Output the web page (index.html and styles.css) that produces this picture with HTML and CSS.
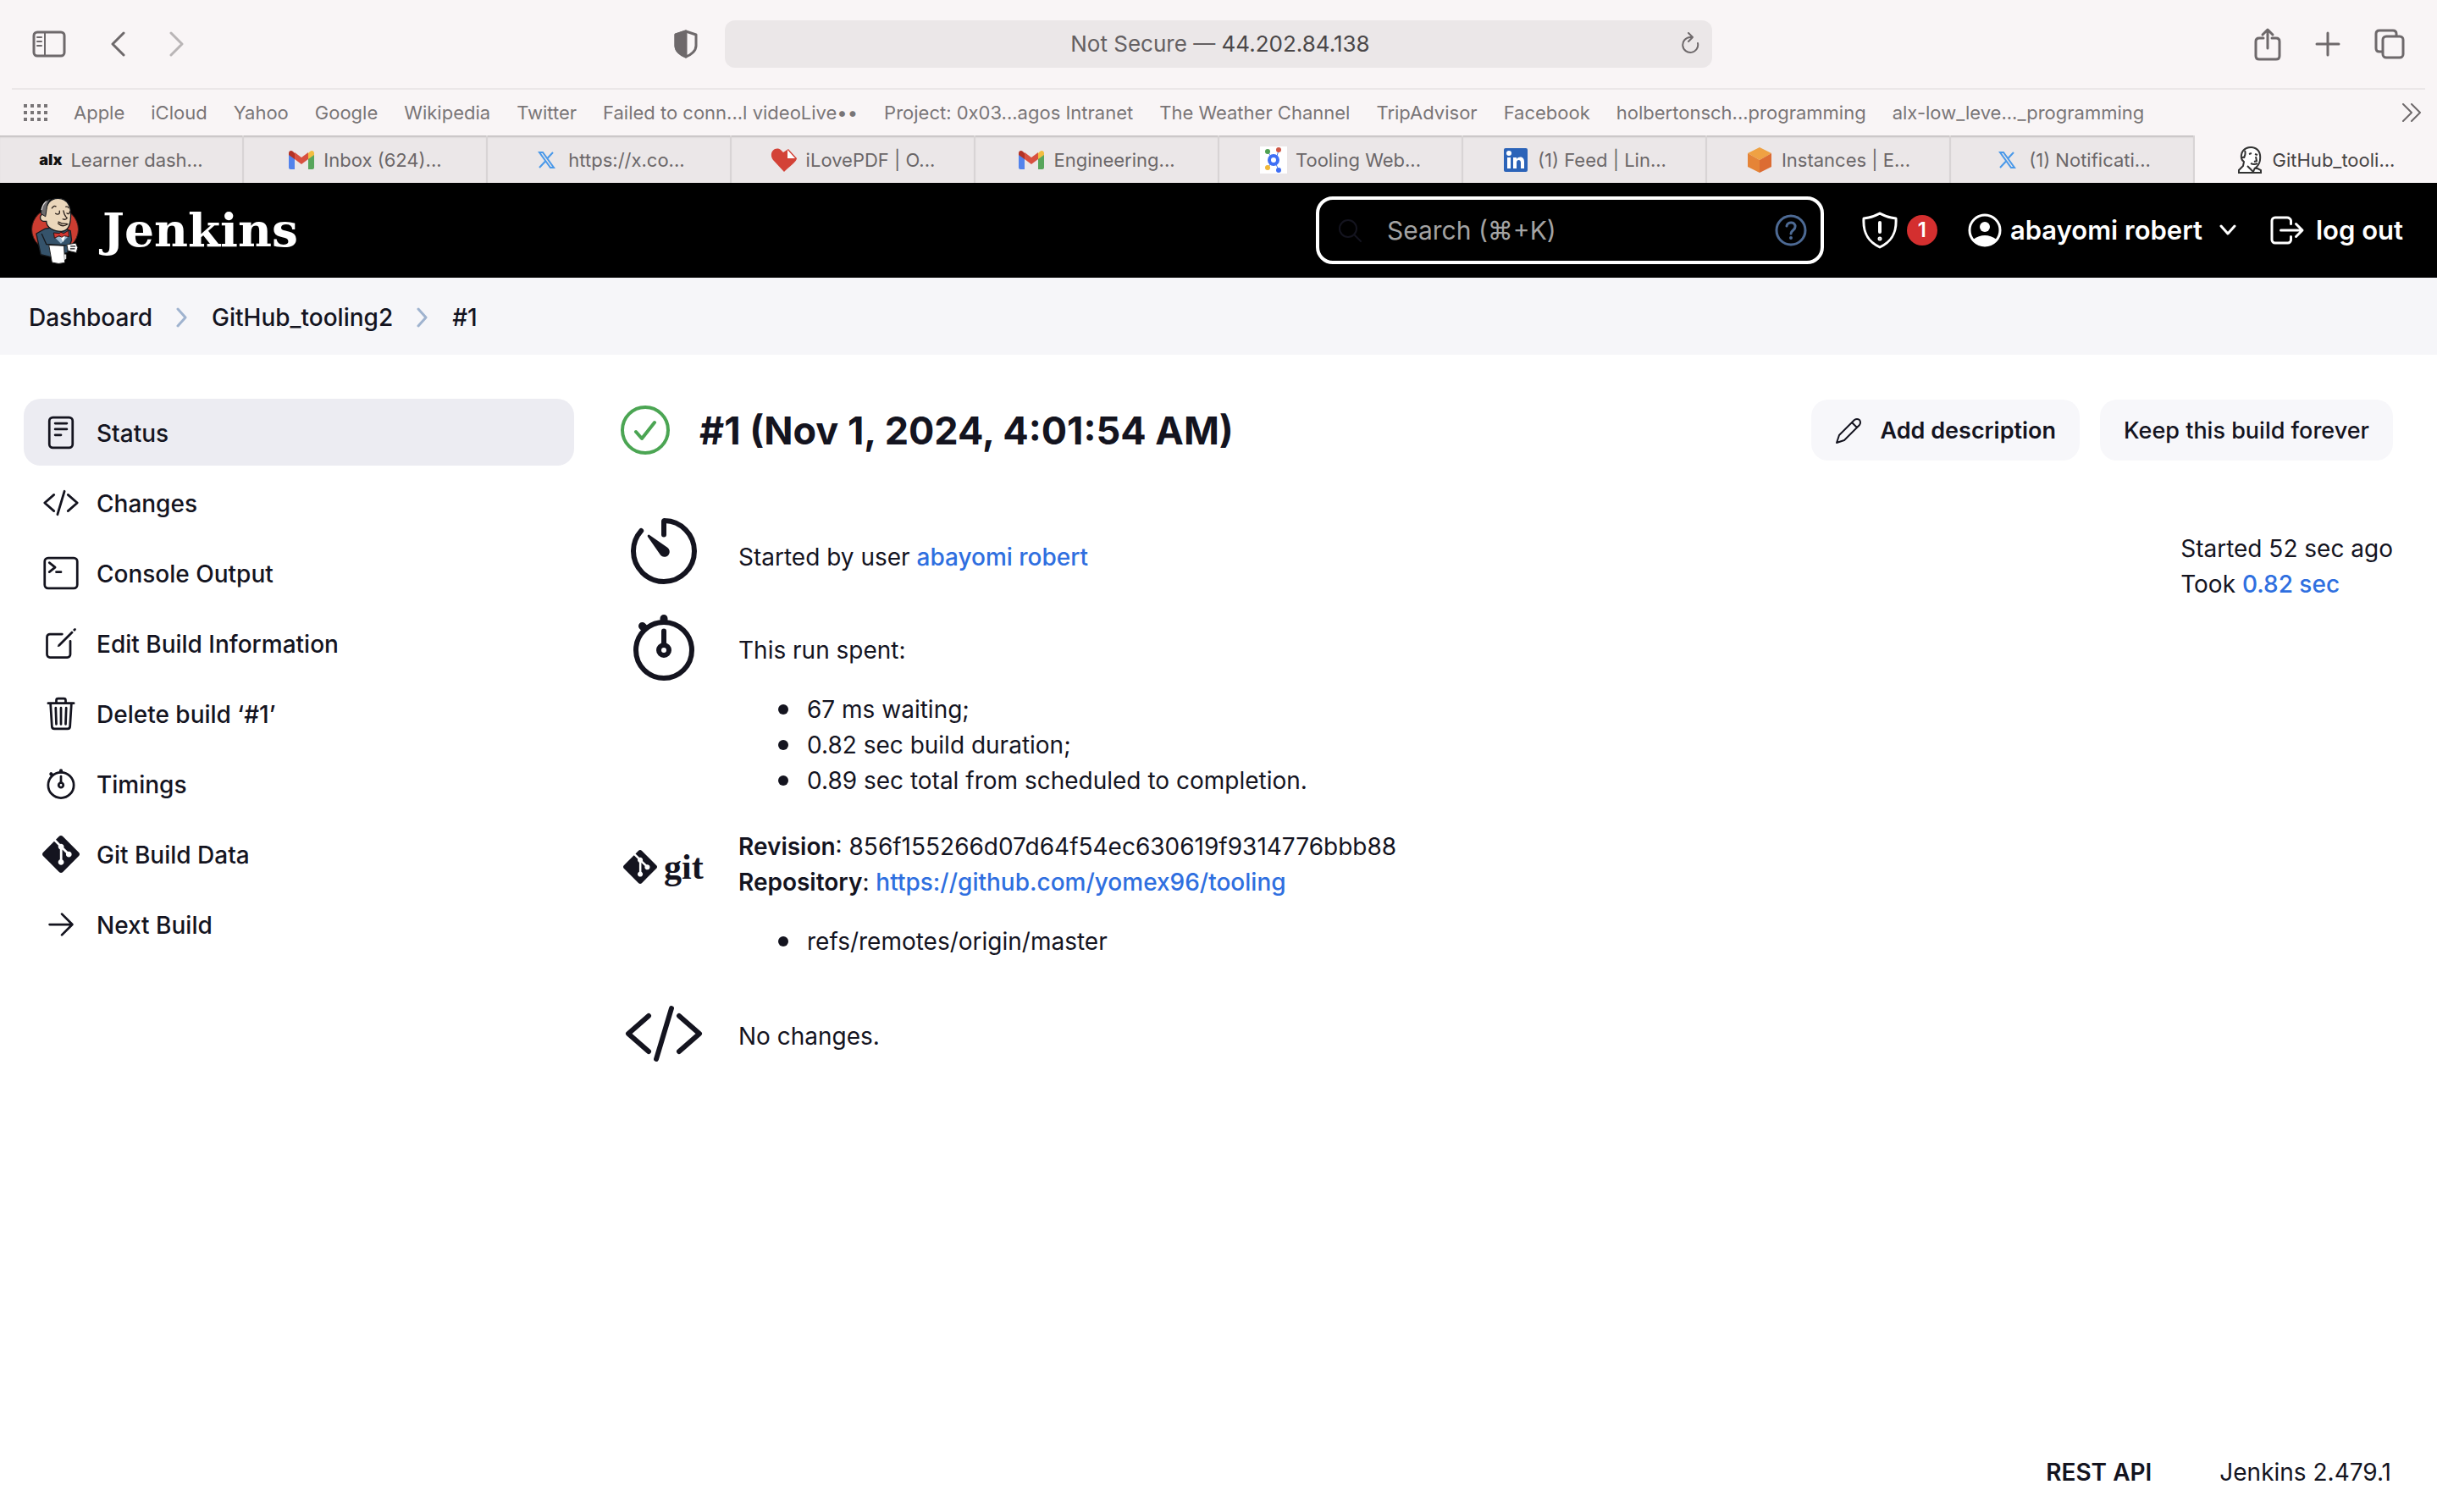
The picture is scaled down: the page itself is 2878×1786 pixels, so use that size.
FILE: index.html
```html
<!DOCTYPE html>
<html lang="en">
<head>
<meta charset="utf-8">
<title>GitHub_tooling2 #1 [Jenkins]</title>
<meta name="viewport" content="width=device-width, initial-scale=1">
<link rel="stylesheet" href="styles.css">
</head>
<body>
<svg class="sprite" aria-hidden="true">
  <symbol id="code" viewBox="0 0 512 512"><path d="M160 368 32 256l128-112M352 368l128-112-128-112M304 96l-96 320"/></symbol>
  <symbol id="stopwatch" viewBox="0 0 512 512"><path d="M256 232v-80"/><path d="M256 88V72M132 132l-12-12" stroke-width="48"/><circle cx="256" cy="272" r="32"/><circle cx="256" cy="272" r="176"/></symbol>
  <symbol id="git" viewBox="0 0 24 24"><path fill="currentColor" stroke="none" d="M23.546 10.93L13.067.452c-.604-.603-1.582-.603-2.188 0L8.708 2.627l2.76 2.76c.645-.215 1.379-.07 1.889.441.516.515.658 1.258.438 1.9l2.658 2.66c.645-.223 1.387-.078 1.9.435.721.72.721 1.884 0 2.604-.719.719-1.881.719-2.6 0-.539-.541-.674-1.337-.404-1.996L12.86 8.955v6.525c.176.086.342.203.488.348.713.721.713 1.883 0 2.6-.719.721-1.889.721-2.609 0-.719-.719-.719-1.879 0-2.598.182-.18.387-.316.605-.406V8.835c-.217-.091-.424-.222-.6-.401-.545-.545-.676-1.342-.396-2.009L7.636 3.7.45 10.881c-.6.605-.6 1.584 0 2.189l10.48 10.477c.604.604 1.582.604 2.186 0l10.43-10.43c.605-.603.605-1.582 0-2.187"/></symbol>
  <symbol id="gmail" viewBox="0 0 32 32"><path fill="#5383ec" d="M1 9v16c0 1 1 2 2 2h5V14z"/><path fill="#58a65c" d="M24 14v13h5c1 0 2-1 2-2V9z"/><path fill="#f2bd42" d="M24 8v7l7-5V8c0-3-3-4-5-2z"/><path fill="#b33225" d="M8 15V8L6 6C4 4 1 5 1 8v2z"/><path fill="#d85140" d="M8 15V7l8 6 8-6v8l-8 6z"/></symbol>
  <symbol id="xlogo" viewBox="0 0 32 32"><path fill="none" stroke="#4a99e9" stroke-width="2" d="M8 7h4l13 18h-4zM24 7 17 14.500M15 17.500 8 25"/></symbol>
</svg>

<header class="browser">
  <div class="toolbar">
    <div class="tools">
      <button class="tool" aria-label="Show sidebar"><svg width="40" height="32" viewBox="0 0 40 32"><rect x="2" y="2" width="36" height="28" rx="4"/><path d="M15 2v28M6 8h5M6 13h5M6 18h5" stroke-width="2"/></svg></button>
      <button class="tool" aria-label="Back"><svg width="18" height="30" viewBox="0 0 18 30"><path d="M16 2 3 15l13 13"/></svg></button>
      <button class="tool faded" aria-label="Forward"><svg width="18" height="30" viewBox="0 0 18 30"><path d="M2 2l13 13L2 28"/></svg></button>
    </div>
    <div class="address">
      <button class="tool" aria-label="Privacy report"><svg width="28" height="34" viewBox="0 0 28 34"><path d="M14 2 26 6v13c0 6-6 11-12 13C8 30 2 25 2 19V6z"/><path d="M14 2v30C8 30 2 25 2 19V6z" fill="currentColor"/></svg></button>
      <div class="url"><span class="url-text"><span>Not Secure —</span> 44.202.84.138</span>
        <button class="tool reload" aria-label="Reload"><svg width="24" height="28" viewBox="0 0 24 28"><path stroke-width="2" d="M21 13a9 9 0 1 1-9-7h3M10 1l5 5-5 5"/></svg></button></div>
    </div>
    <div class="tools tools-end">
      <button class="tool" aria-label="Share"><svg width="32" height="40" viewBox="0 0 32 40"><path d="M11 13H6q-4 0-4 4v17q0 4 4 4h20q4 0 4-4V17q0-4-4-4h-5M16 25V3M10 9l6-6 6 6"/></svg></button>
      <button class="tool" aria-label="New tab"><svg width="30" height="30" viewBox="0 0 30 30"><path d="M15 2v26M2 15h26"/></svg></button>
      <button class="tool" aria-label="Tab overview"><svg width="36" height="36" viewBox="0 0 36 36"><rect x="10" y="9" width="24" height="25" rx="4"/><path d="M9 27H6q-4 0-4-4V6q0-4 4-4h16q4 0 4 4v2"/></svg></button>
    </div>
  </div>
  <nav class="bookmarks" aria-label="Bookmarks">
    <svg width="28" height="20" viewBox="0 0 28 20"><path d="M2 0v20M10 0v20M18 0v20M26 0v20" stroke="currentColor" stroke-width="4" stroke-dasharray="4 4"/></svg>
    <a href="#">Apple</a><a href="#">iCloud</a><a href="#">Yahoo</a><a href="#">Google</a><a href="#">Wikipedia</a><a href="#">Twitter</a><a href="#">Failed to conn...l videoLive••</a><a href="#">Project: 0x03...agos Intranet</a><a href="#">The Weather Channel</a><a href="#">TripAdvisor</a><a href="#">Facebook</a><a href="#">holbertonsch...programming</a><a href="#">alx-low_leve..._programming</a>
    <button class="tool more" aria-label="More bookmarks"><svg width="24" height="22" viewBox="0 0 24 22"><path stroke-width="2" d="M2 1l10 10L2 21M12 1l10 10-10 10"/></svg></button>
  </nav>
  <nav class="tabs" aria-label="Tabs">
    <a class="tab" href="#"><span class="alx">alx</span>Learner dash...</a>
    <a class="tab" href="#"><svg><use href="#gmail"/></svg>Inbox (624)...</a>
    <a class="tab" href="#"><svg><use href="#xlogo"/></svg>https://x.co...</a>
    <a class="tab" href="#"><svg viewBox="0 0 32 32"><path fill="#d34237" d="M16 30 3 16C-3 8 5-1 12 4l3 3 6-4 10 11c-1 4-3 5-15 16z"/><path fill="#fff" d="M20 4l9 10h-9z"/></svg>iLovePDF | O...</a>
    <a class="tab" href="#"><svg><use href="#gmail"/></svg>Engineering...</a>
    <a class="tab" href="#"><svg viewBox="0 0 32 32"><path fill="#fff" d="M0 0h32v32H0z"/><path stroke="#4d7df0" d="M9 6l4 6M10 24l3-4M19 21l3 7M20 11l2-6"/><circle cx="16" cy="16" r="5" fill="none" stroke="#3f6ff5" stroke-width="4"/><circle cx="9" cy="6" r="3" fill="#4fa052"/><circle cx="22" cy="4" r="3" fill="#cf5746"/><circle cx="9" cy="25" r="3" fill="#f0b93a"/><circle cx="22" cy="28" r="3" fill="#3f6ff5"/></svg>Tooling Web...</a>
    <a class="tab" href="#"><svg viewBox="0 0 32 32"><rect x="2" y="2" width="28" height="28" rx="2" fill="#2b63b8"/><circle cx="8" cy="8" r="3" fill="#fff"/><path fill="#fff" d="M6 13h4v13H6zM13 13h4v2c3-4 9-3 9 3v8h-4v-7c0-4-5-4-5 0v7h-4z"/></svg>(1) Feed | Lin...</a>
    <a class="tab" href="#"><svg viewBox="0 0 32 32"><path fill="#efa143" d="M16 1l14 7-14 8L2 8z"/><path fill="#e58437" d="M2 8l14 8v15L2 24z"/><path fill="#dc6c33" d="M30 8l-14 8v15l14-7z"/></svg>Instances | E...</a>
    <a class="tab" href="#"><svg><use href="#xlogo"/></svg>(1) Notificati...</a>
    <a class="tab active" href="#" aria-current="page"><svg viewBox="0 0 32 32"><path fill="#fff" stroke="#333" stroke-width="2" d="M7 23l1-5C3 15 4 5 11 2c8-3 15 1 16 8 1 8-1 12-5 15l6 3v3H2v-3zM9 5c2 4-1 7-1 9M14 9l3-1M21 9l3 1M22 12l1 5-3 1M16 20c4 2 6 1 8 0M12 23l7 7 2-5M8 13c-4-1-3 4 0 5"/></svg>GitHub_tooli...</a>
  </nav>
</header>

<header class="page-header">
  <a class="brand" href="#">
    <svg width="58" height="80" viewBox="48 33 174 242" aria-hidden="true">
      <ellipse cx="135" cy="151" rx="83" ry="78" fill="#cc3d31" stroke="#3b1b18" stroke-width="3"/>
      <path fill="#35536b" stroke="#16191d" stroke-width="4" d="M100 148l-32 18 16 75 35 8 60-15 15-45-4-33-38-16z"/>
      <path fill="#ebd7bb" stroke="#16191d" stroke-width="4" d="M93 122c-18-4-12-32 7-25 2-30 14-57 46-57 36 0 47 34 45 65-1 36-12 53-34 53-25 0-53-13-53-36z"/>
      <path fill="#6d6b6d" stroke="#16191d" stroke-width="3" d="M85 95c0-30 12-47 34-52-10 11-11 18-13 28l-5 34z"/>
      <path fill="none" stroke="#dedada" stroke-width="4" d="M87 82c2-15 8-24 17-32"/>
      <path fill="none" stroke="#2b211c" stroke-width="4" stroke-linecap="round" d="M124 75q7-11 14-6M174 70q8-2 9 4M137 94q8 6 14-1M177 93q6 5 10-1M165 84q3 18 13 26-4 8-15 4M147 124q12 8 30 7M146 130q16 15 34 2M151 93v-8M186 92l3-6"/>
      <path fill="#9cb8cf" d="M133 178l23 24 26-25-8-4-15 7-20-7z"/><path fill="#fff" d="M152 172h20l-8 24z"/>
      <path fill="#d33833" stroke="#31110f" stroke-width="3" d="M130 163l20 2 6-4 10 4 17-10 2 22-18-3-8 5-9-5-17 8z"/>
      <path fill="#fff" stroke="#222" stroke-width="3" d="M113 207l54 2 3 61q-22 7-46-1zM177 205l32-5 7 16-5 18-30-7z"/>
      <path fill="none" stroke="#16191d" stroke-width="4" d="M87 166l17 38 70 4M190 211h18M189 220h17"/><path fill="#ddd" d="M168 240h7v16l-6 4z"/>
    </svg>
    <span class="brand-name">Jenkins</span>
  </a>
  <div class="header-end">
    <label class="search">
      <svg class="icon find" width="32" height="32" viewBox="0 0 32 32" aria-hidden="true"><circle cx="14" cy="14" r="10" stroke-width="2"/><path stroke-width="2" d="M21 21l8 8"/></svg>
      <input type="search" placeholder="Search (⌘+K)" aria-label="Search">
      <button class="help" aria-label="Help"><svg class="icon" width="38" height="38" viewBox="0 0 38 38"><circle cx="19" cy="19" r="17" stroke-width="3"/><path stroke-width="3" d="M14 14c1-6 11-5 10 1 0 4-5 4-5 8"/><circle cx="19" cy="28" r="1" stroke-width="2"/></svg></button>
    </label>
    <a class="header-link" href="#" aria-label="Security warnings"><svg class="icon" width="44" height="44" viewBox="0 0 44 44"><path stroke-width="3" d="M22 2q9 5 19 6C42 24 37 35 22 42 7 35 2 24 3 8q10-1 19-6z"/><path stroke-width="4" d="M22 13v11"/><circle cx="22" cy="32" r="1" stroke-width="3"/></svg><span class="badge">1</span></a>
    <a class="header-link" href="#"><svg class="icon" width="40" height="40" viewBox="0 0 40 40"><circle cx="20" cy="20" r="18" stroke-width="3"/><circle cx="20" cy="16" r="6" fill="currentColor" stroke="none"/><path fill="currentColor" stroke="none" d="M6 31q14-10 28 0-14 15-28 0z"/></svg><span>abayomi robert</span><svg class="icon caret" width="20" height="14" viewBox="0 0 20 14"><path stroke-width="3" d="M2 2l8 9 8-9"/></svg></a>
    <a class="header-link logout" href="#"><svg class="icon" width="48" height="48" viewBox="0 0 512 512"><path stroke-width="32" d="M304 336v40a40 40 0 0 1-40 40H104a40 40 0 0 1-40-40V136a40 40 0 0 1 40-40h152c22 0 48 18 48 40v40M368 336l80-80-80-80M176 256h256"/></svg><span>log out</span></a>
  </div>
</header>

<nav class="breadcrumb" aria-label="Breadcrumb">
  <a href="#">Dashboard</a>
  <svg class="icon" width="14" height="24" viewBox="0 0 14 24"><path stroke-width="3" d="M2 2l9 10-9 10"/></svg>
  <a href="#">GitHub_tooling2</a>
  <svg class="icon" width="14" height="24" viewBox="0 0 14 24"><path stroke-width="3" d="M2 2l9 10-9 10"/></svg>
  <a href="#">#1</a>
</nav>

<div class="page">
  <nav class="tasks" aria-label="Build">
    <a class="task current" href="#"><svg class="icon" viewBox="0 0 512 512"><rect x="96" y="48" width="320" height="416" rx="48"/><path d="M176 128h160M176 208h160M176 288h80"/></svg><span>Status</span></a>
    <a class="task" href="#"><svg class="icon"><use href="#code"/></svg><span>Changes</span></a>
    <a class="task" href="#"><svg class="icon" viewBox="0 0 512 512"><rect x="32" y="48" width="448" height="416" rx="48"/><path d="m96 112 80 64-80 64M192 240h64"/></svg><span>Console Output</span></a>
    <a class="task" href="#"><svg class="icon" viewBox="0 0 512 512"><path d="M384 224v184a40 40 0 0 1-40 40H104a40 40 0 0 1-40-40V168a40 40 0 0 1 40-40h167.480"/><path fill="currentColor" stroke="none" d="M459.940 53.250a16.060 16.060 0 0 0-23.220-.56L424.350 65a8 8 0 0 0 0 11.310l11.340 11.320a8 8 0 0 0 11.340 0l12.060-12c6.100-6.090 6.670-16.010.85-22.380zM399.340 90 218.820 270.200a9 9 0 0 0-2.310 3.930L208.160 299a3.910 3.910 0 0 0 4.860 4.860l24.850-8.350a9 9 0 0 0 3.930-2.310L422 112.660a9 9 0 0 0 0-12.660l-9.950-10a9 9 0 0 0-12.710 0z"/></svg><span>Edit Build Information</span></a>
    <a class="task" href="#"><svg class="icon" viewBox="0 0 512 512"><path d="m112 112 20 320c1 18 14 32 32 32h184c18 0 31-14 32-32l20-320M80 112h352M192 112V72a24 24 0 0 1 24-24h80a24 24 0 0 1 24 24v40M256 176v224M184 176l8 224M328 176l-8 224"/></svg><span>Delete build ‘#1’</span></a>
    <a class="task" href="#"><svg class="icon"><use href="#stopwatch"/></svg><span>Timings</span></a>
    <a class="task" href="#"><svg class="icon"><use href="#git"/></svg><span>Git Build Data</span></a>
    <a class="task" href="#"><svg class="icon" viewBox="0 0 512 512"><path d="m268 112 144 144-144 144M392 256H100"/></svg><span>Next Build</span></a>
  </nav>

  <main class="build">
    <div class="title-bar">
      <svg class="icon ok" width="60" height="60" viewBox="0 0 60 60" role="img" aria-label="Success"><circle cx="30" cy="30" r="27" stroke-width="4"/><path stroke-width="4" d="M19 32l7 8 15-19"/></svg>
      <h1>#1 (Nov 1, 2024, 4:01:54 AM)</h1>
      <div class="actions">
        <button class="btn strong"><svg class="icon" width="32" height="32" viewBox="0 0 32 32"><path stroke-width="2" d="M2 30l3-9L23 3q3-2 6 0 2 3 0 6L11 27zM20 6l6 6"/></svg>Add description</button>
        <button class="btn">Keep this build forever</button>
      </div>
    </div>
    <div class="details">
      <div class="facts">
        <section class="fact cause">
          <svg class="icon" viewBox="0 0 512 512"><path d="M112.910 128A191.850 191.850 0 0 0 64 254c-1 106 86 194 192 194s192-86 192-192c0-104-84-190-187-192a4 4 0 0 0-5 4v84"/><path fill="currentColor" stroke="none" d="m233.380 278.630-79-113a8.130 8.130 0 0 1 11.320-11.320l113 79a32.500 32.500 0 0 1-37.250 53.260 33.210 33.210 0 0 1-8.070-7.940z"/></svg>
          <div class="text"><p>Started by user <a href="#">abayomi robert</a></p></div>
        </section>
        <section class="fact timing">
          <svg class="icon"><use href="#stopwatch"/></svg>
          <div class="text"><p>This run spent:</p>
            <ul><li>67 ms waiting;</li><li>0.82 sec build duration;</li><li>0.89 sec total from scheduled to completion.</li></ul></div>
        </section>
        <section class="fact scm">
          <div class="git-logo"><svg class="icon" width="40" height="40"><use href="#git"/></svg><span>git</span></div>
          <div class="text"><p><b>Revision</b>: 856f155266d07d64f54ec630619f9314776bbb88</p><p><b>Repository</b>: <a href="#">https://github.com/yomex96/tooling</a></p>
            <ul><li>refs/remotes/origin/master</li></ul></div>
        </section>
        <section class="fact changes">
          <svg class="icon"><use href="#code"/></svg>
          <div class="text"><p>No changes.</p></div>
        </section>
      </div>
      <aside class="times"><p>Started 52 sec ago</p><p>Took <a href="#">0.82 sec</a></p></aside>
    </div>
  </main>
</div>

<footer class="page-footer"><a class="strong" href="#">REST API</a><button>Jenkins 2.479.1</button></footer>
</body>
</html>
```
FILE: styles.css
```css
*, *::before, *::after { box-sizing: border-box; }

body {
  margin: 0;
  min-height: 100vh;
  display: flex;
  flex-direction: column;
  background: #fff;
  color: #14141f;
  font: 400 28px/42px Inter, "Noto Sans", sans-serif;
}

p, ul, h1 { margin: 0; }
a { color: inherit; text-decoration: none; }
button { margin: 0; padding: 0; border: 0; background: none; color: inherit; font: inherit; }
svg { display: block; flex: none; }
.sprite { position: absolute; width: 0; height: 0; }
.icon { fill: none; stroke: currentColor; stroke-width: 32; stroke-linecap: round; stroke-linejoin: round; }

/* Browser window */
.browser { background: #f9f5f6; color: #797577; font-size: 22px; line-height: 32px; }
.toolbar {
  height: 106px;
  margin: 0 14px;
  padding: 0 24px;
  border-bottom: 2px solid #ebe7e8;
  display: grid;
  grid-template-columns: 1fr auto 1fr;
  align-items: center;
}
.tool { color: #6e696b; }
.tool svg { fill: none; stroke: currentColor; stroke-width: 3; stroke-linecap: round; stroke-linejoin: round; }
.tools { display: flex; align-items: center; gap: 52px; }
.tools-end { justify-content: flex-end; gap: 40px; }
.faded { color: #b9b5b6; }
.address { display: flex; align-items: center; gap: 32px; padding-right: 60px; }
.url {
  width: 1166px;
  height: 56px;
  padding: 0 14px 0 42px;
  border-radius: 12px;
  background: #ebe7e8;
  color: #4a4748;
  font-size: 26px;
  display: flex;
  align-items: center;
}
.url-text { flex: 1; text-align: center; }
.url-text span { color: #646062; }

.bookmarks { height: 54px; padding: 0 18px 0 28px; display: flex; align-items: center; gap: 31px; white-space: nowrap; }
.more { margin-left: auto; }

.tabs { height: 56px; display: flex; }
.tab {
  flex: 1 1 0;
  min-width: 0;
  padding-top: 2px;
  display: flex;
  align-items: center;
  justify-content: center;
  gap: 10px;
  border-right: 2px solid #d8d4d5;
  background: #ebe7e8;
  box-shadow: inset 0 3px 2px -1px #c4c0c1;
  color: #6b6769;
  white-space: nowrap;
}
.tab svg { width: 32px; height: 32px; }
.tab.active { border: 0; background: #f9f5f6; box-shadow: none; color: #474445; }
.alx { color: #111; font-weight: 900; font-size: 18px; }

/* Jenkins header */
.page-header {
  min-height: 112px;
  padding: 0 40px 0 36px;
  background: #000;
  color: #fff;
  display: flex;
  align-items: center;
  justify-content: space-between;
}
.brand { display: flex; align-items: center; gap: 27px; }
.brand-name { font: 700 55px/80px "DejaVu Serif", serif; }
.header-end { display: flex; align-items: center; font-size: 31px; font-weight: 600; }
.search {
  width: 600px;
  height: 80px;
  margin-right: 44px;
  padding: 0 16px 0 20px;
  border: 4px solid #fff;
  border-radius: 20px;
  display: flex;
  align-items: center;
  gap: 28px;
}
.find { color: #14141f; }
.search input { flex: 1; min-width: 0; border: 0; padding: 0; background: none; color: #fff; font: inherit; font-size: 30px; font-weight: 400; outline: 0; }
.search input::placeholder { color: #a3a3a3; opacity: 1; }
.help { color: #4d6a94; }
.header-link { display: flex; align-items: center; gap: 10px; margin-right: 36px; white-space: nowrap; }
.badge { width: 36px; height: 36px; border-radius: 50%; background: #d42f2f; font-size: 24px; line-height: 36px; text-align: center; }
.caret { margin-left: 10px; }
.logout { margin-right: 0; }

.breadcrumb {
  height: 91px;
  padding: 2px 34px 0;
  background: #f6f6f9;
  display: flex;
  align-items: center;
  gap: 28px;
  font-weight: 500;
}
.breadcrumb .icon { color: #9fb3cf; }

/* Page body */
.page { flex: 1; display: flex; padding: 52px 52px 0 28px; gap: 54px; }
.tasks { flex: 0 0 650px; display: flex; flex-direction: column; gap: 4px; font-weight: 500; }
.task { height: 79px; padding: 0 22px; border-radius: 20px; display: flex; align-items: center; gap: 20px; }
.task .icon { width: 44px; height: 44px; }
.task span { padding-top: 3px; }
.task.current { background: #ececf2; }

.build { flex: 1; min-width: 0; }
.title-bar { min-height: 74px; display: flex; align-items: center; gap: 34px; }
h1 { padding-top: 2px; font-size: 45px; line-height: 60px; font-weight: 700; }
.ok { color: #4ba553; }
.actions { margin-left: auto; display: flex; align-items: center; gap: 24px; }
.btn { height: 72px; padding: 2px 28px 0; border-radius: 20px; background: #f7f7fa; display: flex; align-items: center; gap: 22px; font-size: 27px; font-weight: 500; }
.strong { font-weight: 600; }

.details { margin-top: 58px; display: flex; justify-content: space-between; }
.facts { display: flex; flex-direction: column; }
.fact { display: flex; gap: 40px; padding-left: 4px; }
.fact > .icon { width: 96px; height: 96px; }
.cause .text { padding-top: 34px; }
.timing { margin-top: 18px; }
.timing .text, .changes .text { padding-top: 30px; }
.scm { margin-top: 36px; }
.changes { margin-top: 40px; }
.text a, .times a { color: #2f6fe0; font-weight: 500; }
.text ul { margin-top: 28px; padding-left: 47px; list-style: none; }
.text li { display: flex; align-items: center; gap: 22px; }
.text li::before { content: ""; width: 12px; height: 12px; border-radius: 50%; background: currentColor; }
.text b { font-weight: 600; }
.git-logo { width: 96px; height: 90px; display: flex; align-items: center; gap: 8px; }
.git-logo span { font: 700 42px/42px "Liberation Serif", serif; }
.times { padding-top: 24px; }

.page-footer { padding: 0 54px 26px; display: flex; justify-content: flex-end; gap: 80px; }
```
